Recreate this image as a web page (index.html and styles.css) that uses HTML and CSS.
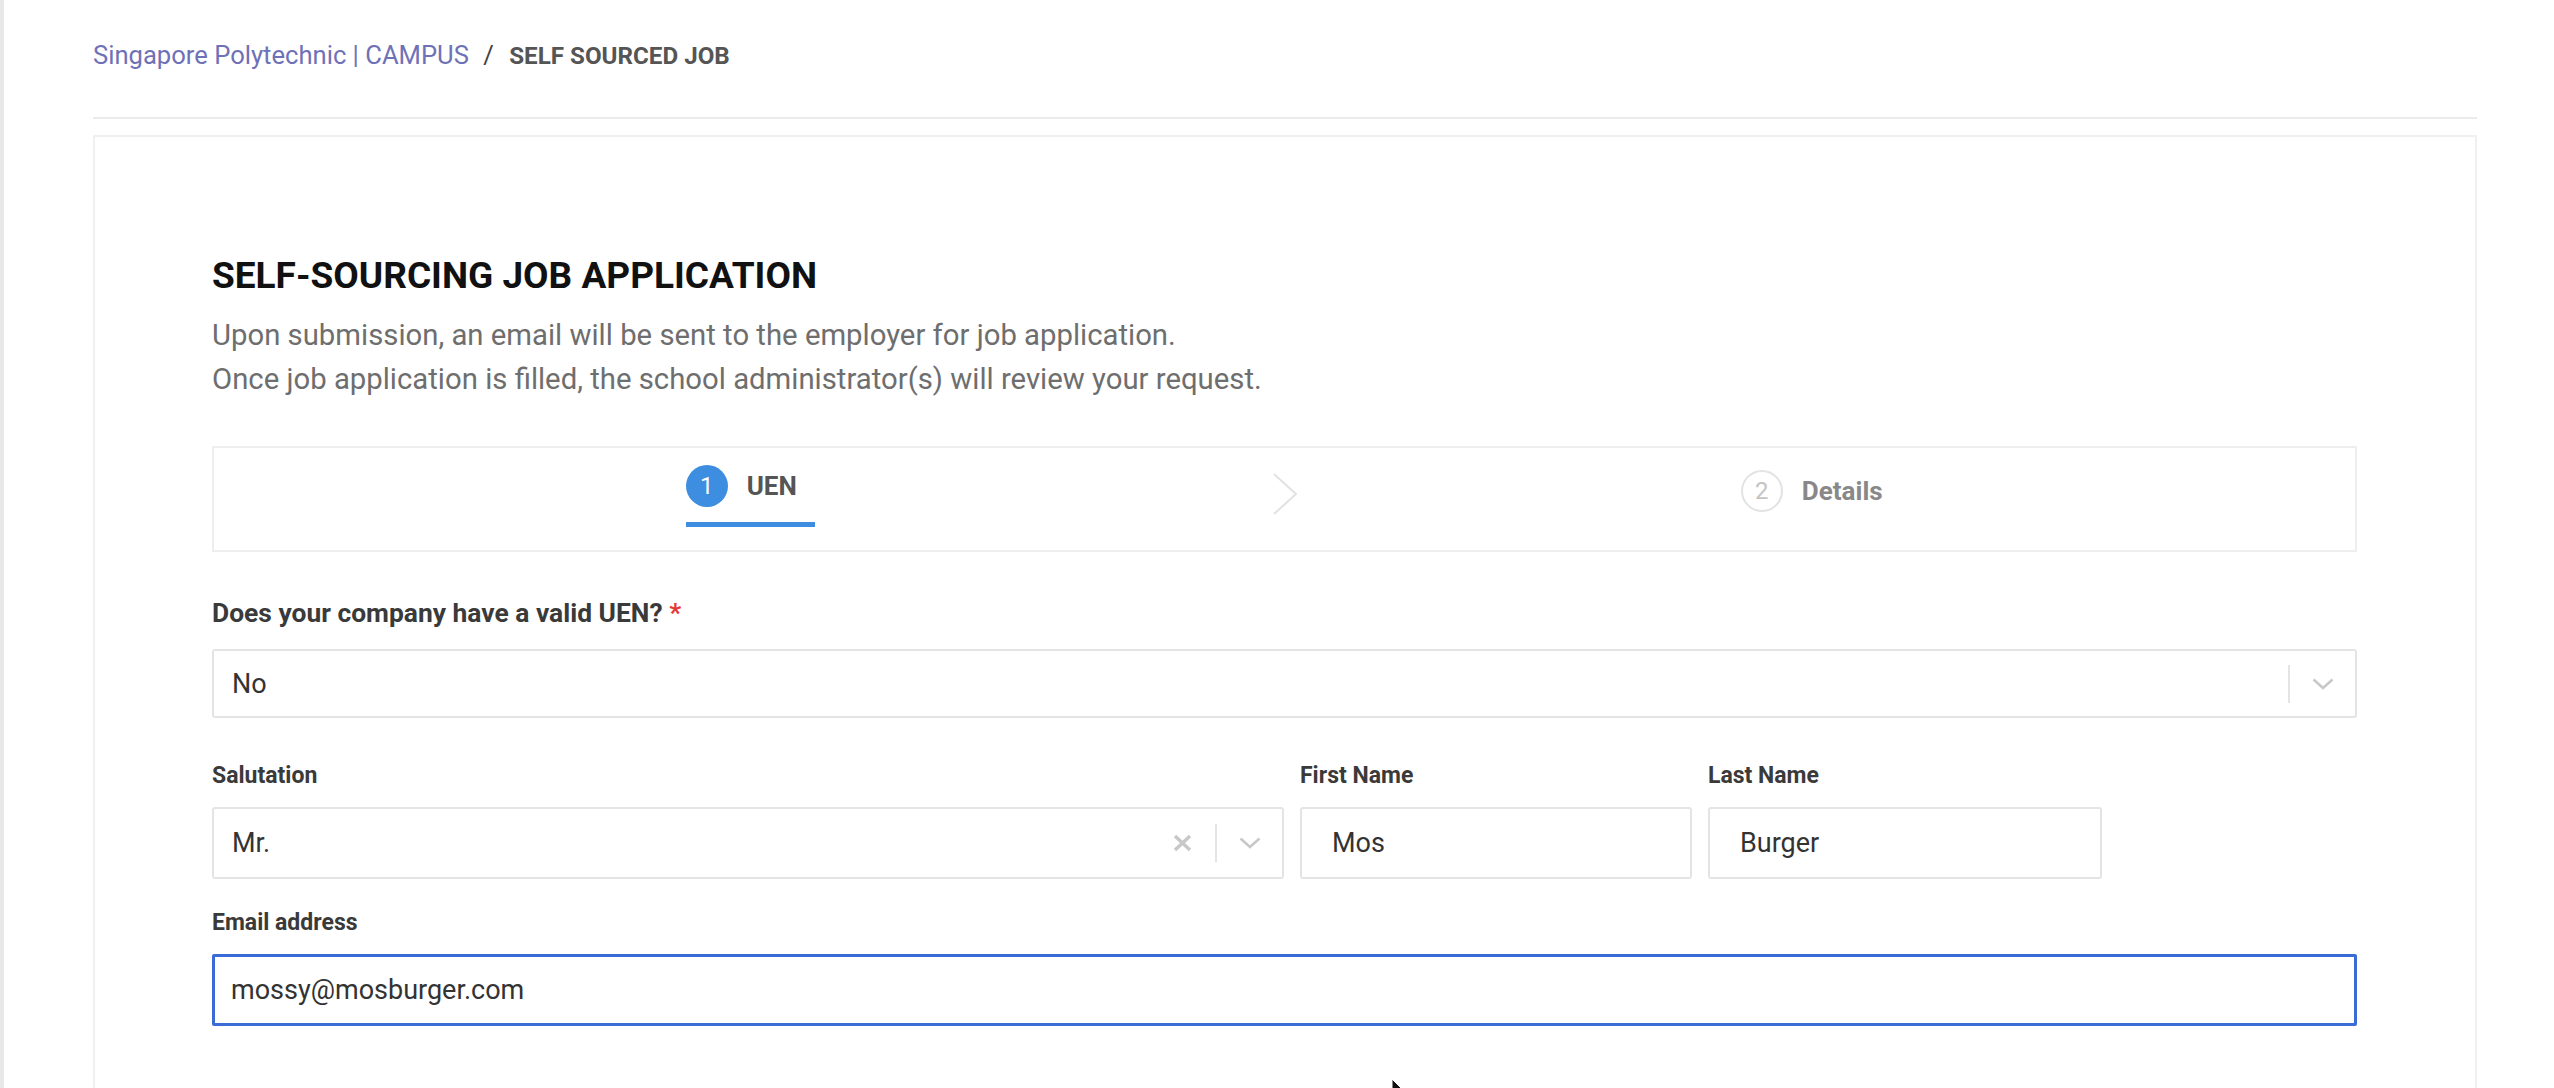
FILE: index.html
```html
<html>
  <head>
    <link rel="stylesheet" href="styles.css">
  </head>
  <body>
    <div class="page">
      <div class="breadcrumb">
        <a class="crumb-link">Singapore Polytechnic | CAMPUS</a>
        <span class="crumb-sep">/</span>
        <span class="crumb-current">SELF SOURCED JOB</span>
      </div>
      <div class="rule"></div>

      <div class="card">
        <h1 class="title">SELF-SOURCING JOB APPLICATION</h1>
        <p class="intro">Upon submission, an email will be sent to the employer for job application.<br>Once job application is filled, the school administrator(s) will review your request.</p>

        <div class="steps">
          <div class="step step-active">
            <div class="step-inner">
              <div class="step-head">
                <span class="step-num">1</span>
                <span class="step-label">UEN</span>
              </div>
              <div class="step-bar"></div>
            </div>
          </div>
          <svg class="step-arrow" width="26" height="42" viewBox="0 0 26 42"><polyline points="2,1 24,21 2,41" fill="none" stroke="#e2e2e2" stroke-width="2"/></svg>
          <div class="step step-next">
            <div class="step-head">
              <span class="step-num">2</span>
              <span class="step-label">Details</span>
            </div>
          </div>
        </div>

        <label class="field-label label-uen">Does your company have a valid UEN? <span class="req">*</span></label>
        <div class="select select-uen">
          <span class="value">No</span>
          <span class="select-tools">
            <span class="divider"></span>
            <svg class="chev" width="22" height="12" viewBox="0 0 22 12"><polyline points="1.5,1.5 11,10 20.5,1.5" fill="none" stroke="#c8c8c8" stroke-width="2.5"/></svg>
          </span>
        </div>

        <div class="name-row">
          <div class="field">
            <label class="field-label">Salutation</label>
            <div class="select select-sal">
              <span class="value">Mr.</span>
              <span class="select-tools">
                <svg class="clear" width="19" height="18" viewBox="0 0 19 18"><path d="M2 2 L17 16 M17 2 L2 16" stroke="#c8c8c8" stroke-width="3.5"/></svg>
                <span class="divider"></span>
                <svg class="chev" width="22" height="12" viewBox="0 0 22 12"><polyline points="1.5,1.5 11,10 20.5,1.5" fill="none" stroke="#c8c8c8" stroke-width="2.5"/></svg>
              </span>
            </div>
          </div>
          <div class="field">
            <label class="field-label">First Name</label>
            <div class="input input-name">Mos</div>
          </div>
          <div class="field">
            <label class="field-label">Last Name</label>
            <div class="input input-name">Burger</div>
          </div>
        </div>

        <label class="field-label label-email">Email address</label>
        <div class="input input-focus">mossy@mosburger.com</div>
      </div>
    </div>
    <svg class="cursor" width="20" height="20" viewBox="0 0 20 20"><path d="M1 1 L1 17 L5 13 L8 19 L10 18 L7 12 L12 12 Z" fill="#111" stroke="#fff" stroke-width="1"/></svg>
  </body>
</html>
```

FILE: styles.css
```css
body {
  margin: 0;
  background: #fff;
  font-family: Roboto, "Liberation Sans", sans-serif;
  color: #333;
  height: 1088px;
  overflow: hidden;
  position: relative;
}

.page {
  border-left: 4px solid #e8e8e8;
  height: 1088px;
  box-sizing: border-box;
  padding: 38px 77px 0 89px;
}

.breadcrumb {
  font-size: 25.6px;
  line-height: 34px;
}

.crumb-link {
  color: #6f71b7;
}

.crumb-sep {
  color: #444;
  margin: 0 9px 0 8px;
}

.crumb-current {
  color: #555;
  font-weight: 700;
  font-size: 24.2px;
}

.rule {
  height: 2px;
  background: #ebebeb;
  margin-top: 44px;
}

.card {
  margin-top: 16px;
  border: 2px solid #f0f0f0;
  border-bottom: none;
  padding: 117px 118px 80px 117px;
}

.title {
  margin: 0 0 15px;
  font-size: 37px;
  line-height: 44px;
  font-weight: 700;
  color: #111;
}

.intro {
  margin: 0;
  font-size: 29.3px;
  line-height: 44px;
  color: #6e6e6e;
}

.steps {
  margin-top: 45px;
  height: 106px;
  box-sizing: border-box;
  border: 2px solid #eeeeee;
  display: flex;
  align-items: flex-start;
}

.step {
  flex: 1;
  display: flex;
  justify-content: center;
  align-items: flex-start;
}

.step-active {
  padding-top: 17px;
}

.step-active .step-inner {
  margin-left: 15px;
}

.step-next {
  padding-top: 22px;
}

.step-next .step-head {
  margin-right: 29px;
}

.step-arrow {
  margin-top: 25px;
}

.step-head {
  display: flex;
  align-items: center;
  gap: 19px;
}

.step-active .step-head {
  padding-right: 18px;
}

.step-num {
  width: 42px;
  height: 42px;
  border-radius: 50%;
  box-sizing: border-box;
  display: flex;
  align-items: center;
  justify-content: center;
  font-size: 24px;
}

.step-label {
  font-size: 26px;
  font-weight: 700;
}

.step-active .step-num {
  background: #3d8de0;
  color: #fff;
}

.step-active .step-label {
  color: #555;
}

.step-bar {
  height: 5px;
  background: #3d8de0;
  margin-top: 15px;
}

.step-next .step-num {
  border: 2px solid #e3e3e3;
  color: #c4c4c4;
}

.step-next .step-label {
  color: #888;
}

.field-label {
  display: block;
  font-size: 23px;
  line-height: 30px;
  font-weight: 700;
  color: #3a3a3a;
}

.label-uen {
  font-size: 26.4px;
  margin-top: 46px;
  margin-bottom: 21px;
}

.req {
  color: #e53935;
}

.select, .input {
  box-sizing: border-box;
  border: 2px solid #e4e4e4;
  border-radius: 3px;
  display: flex;
  align-items: center;
  font-size: 27px;
  color: #333;
}

.select {
  padding-left: 18px;
}

.select-uen {
  height: 69px;
}

.value {
  flex: 1;
}

.select-tools {
  display: flex;
  align-items: center;
  height: 100%;
}

.divider {
  width: 2px;
  height: 38px;
  background: #e4e4e4;
  margin-right: 22px;
}

.chev {
  margin-right: 21px;
}

.clear {
  margin-right: 23px;
}

.name-row {
  display: grid;
  grid-template-columns: 1072px 392px 394px;
  gap: 16px;
  margin-top: 43px;
}

.name-row .field-label {
  margin-bottom: 16px;
}

.select-sal, .input {
  height: 72px;
}

.input-name {
  padding-left: 30px;
}

.label-email {
  margin-top: 29px;
  margin-bottom: 16px;
}

.input-focus {
  border: 3px solid #3b6bd6;
  padding-left: 16px;
  border-radius: 2px;
}

.cursor {
  position: absolute;
  left: 1391px;
  top: 1078px;
}
```
